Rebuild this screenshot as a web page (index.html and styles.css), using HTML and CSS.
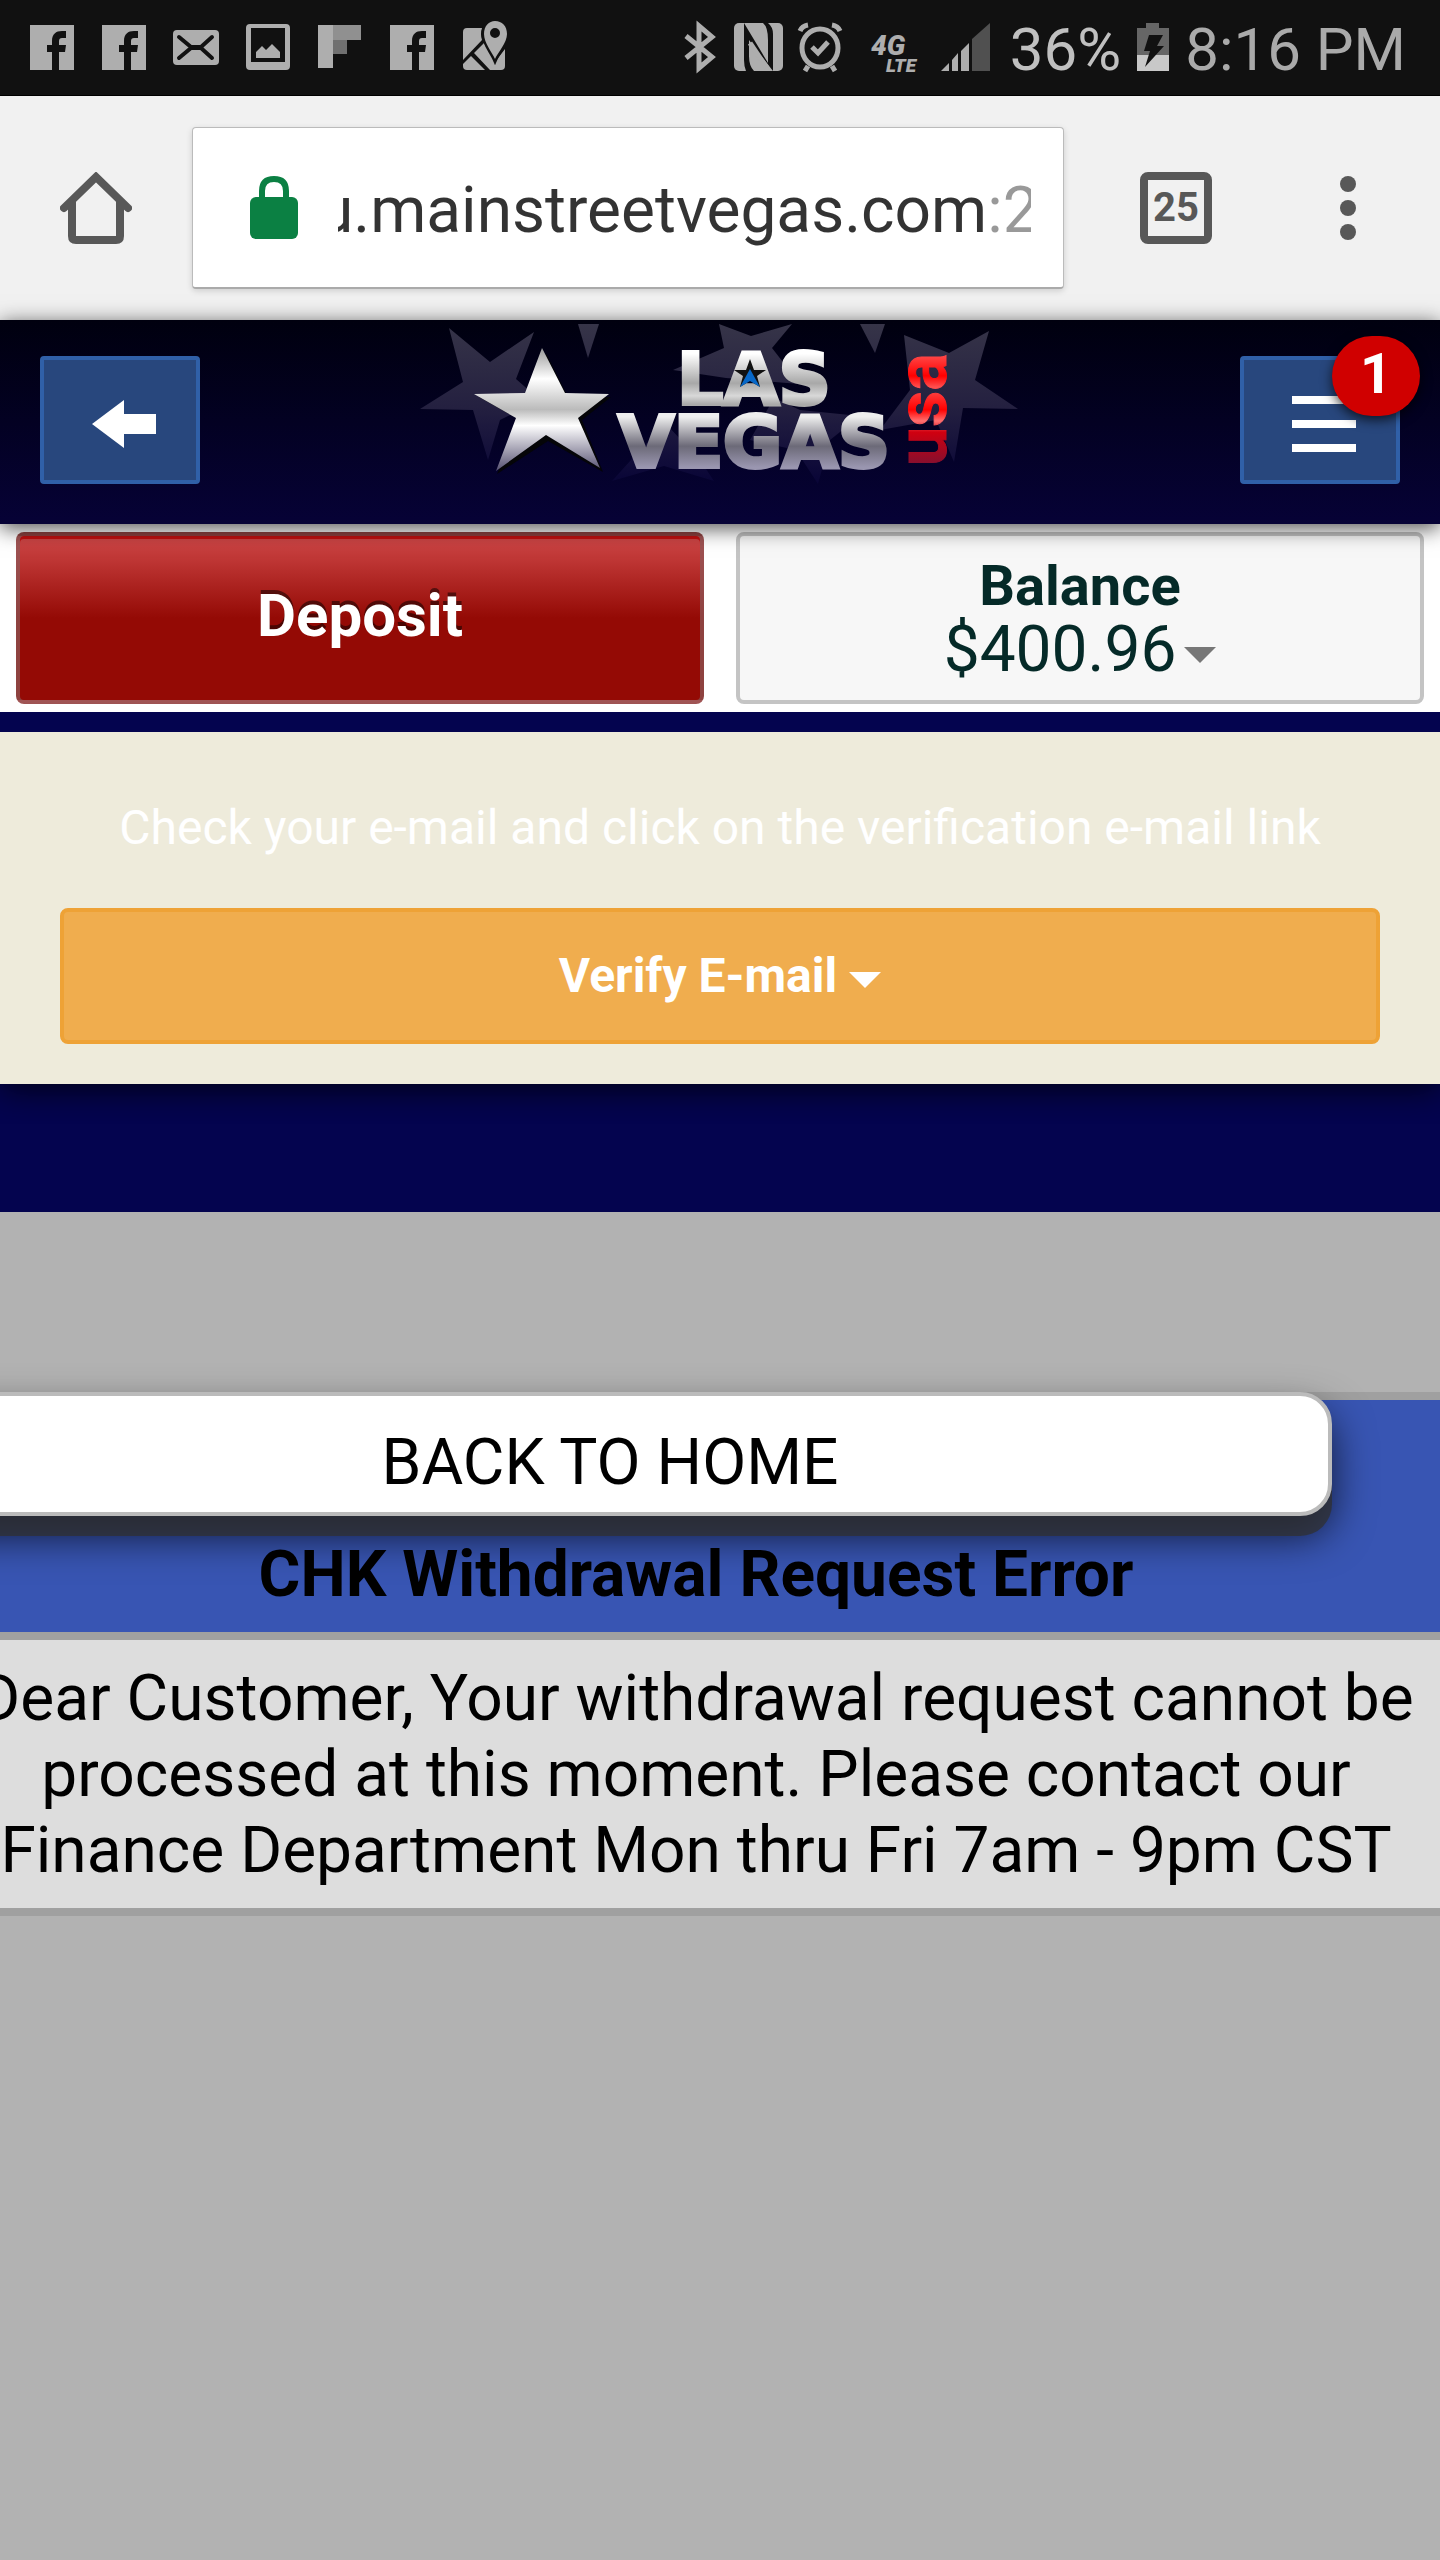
FILE: index.html
```
<!DOCTYPE html>
<html lang="en">
   <head>
      <meta charset="utf-8">
      <meta name="viewport" content="width=device-width, initial-scale=1">
      <title>Las Vegas USA</title>
      <link rel="stylesheet" href="styles.css">
   </head>
   <body>

      <!--
      Phone status bar
      -->
      <div class="status">
         <svg class="notifications" width="480" height="52" viewBox="30 20 480 52">
            <defs>
               <g id="facebook">
                  <rect width="44" height="45" />
                  <path class="cut" d="M22,45 V27 H17 V20 H22 V16 C22,9 26,6 32,6 H36 V13 H32 C30,13 29,14 29,16 V20 H36 L35,27 H29 V45 Z" />
               </g>
            </defs>
            <use href="#facebook" x="30" y="25" />
            <use href="#facebook" x="102" y="25" />
            <rect x="173" y="30" width="46" height="35" rx="4" />
            <path class="cut-line" d="M179,37 L191,47 H201 L212,37 M179,58 L191,48 H201 L212,58" />
            <path fill-rule="evenodd" d="M250,24 H286 Q290,24 290,28 V66 Q290,70 286,70 H250 Q246,70 246,66 V28 Q246,24 250,24 Z M251,28 V62 H285 V28 Z" />
            <path d="M256,58 V52 L262,46 L266,50 L272,44 L280,52 V58 Z" />
            <rect x="318" y="25" width="15" height="43" />
            <rect x="333" y="25" width="28" height="15" fill="#909090" />
            <rect x="333" y="40" width="14" height="14" fill="#707070" />
            <use href="#facebook" x="390" y="25" />
            <path d="M467,28 H482 Q480,34 482,40 L463,60 V32 Q463,28 467,28 Z" />
            <path d="M463,64 L471,56 L485,70 H467 Q463,70 463,66 Z" />
            <path d="M474,53 L484,43 L495,62 L505,49 V66 Q505,70 501,70 H490 Z" />
            <path class="pin" fill-rule="evenodd" d="M495,21 C502,21 507,26 507,34 C507,43 498,52 495,59 C492,52 484,43 484,34 C484,26 489,21 495,21 Z M495,28 A5,5 0 1 0 495,38 A5,5 0 1 0 495,28 Z" />
         </svg>
         <div class="system">
            <svg width="310" height="60" viewBox="684 20 310 60">
               <path class="thin" d="M686,36 L712,57 L699,68 V26 L712,37 L686,58" />
               <rect x="734" y="23" width="49" height="48" rx="5" />
               <path class="cut" d="M744,23 L768,63 V40 Q768,27 763,23 H768 Q773,27 773,34 V71 L749,40 V56 Q749,66 754,71 H746 Q744,66 744,60 Z" />
               <path class="thin" d="M750,43 L767,68" />
               <ellipse class="thin" cx="820" cy="48" rx="18" ry="19" />
               <path class="thin" d="M812,47 L818,53 L828,42 M800,31 Q802,26 808,25 M832,25 Q838,26 840,31 M808,66 L805,71 M832,66 L835,71" />
               <text class="network" x="871" y="55">4G</text>
               <text class="lte" x="886" y="72">LTE</text>
               <path d="M941,71 L949,63 V71 Z M952,60 L958,53 V71 H952 Z M961,51 L969,43 V71 H961 Z" />
               <path fill="#505050" d="M972,39 L990,23 V71 H972 Z" />
            </svg>
            <span class="percent">36%</span>
            <svg width="32" height="48" viewBox="0 0 32 48">
               <path fill="#666" d="M9,0 H22 V5 H32 V33 H0 V5 H9 Z" />
               <rect y="32" width="32" height="16" fill="#c8c8c8" />
               <path class="cut" d="M12,12 H26 L20,23 H27 L8,44 L13,28 H7 Z" />
            </svg>
            <span>8:16 PM</span>
         </div>
      </div>

      <!--
      Browser toolbar
      -->
      <div class="toolbar">
         <button class="tool" type="button" aria-label="Home">
            <svg width="72" height="72" viewBox="0 0 72 72">
               <path d="M4,36 L36,5 L68,36 M12,30 V64 Q12,68 16,68 H56 Q60,68 60,64 V30" />
            </svg>
         </button>
         <div class="address">
            <svg width="48" height="64" viewBox="0 0 48 64">
               <rect y="21" width="48" height="42" rx="6" fill="#0b8043" />
               <path d="M12,24 V15 Q12,3 24,3 Q36,3 36,15 V24" fill="none" stroke="#0b8043" stroke-width="6" />
            </svg>
            <div class="url-window">
               <input class="url" type="text" aria-label="Address" value="u.mainstreetvegas.com:2">
            </div>
         </div>
         <button class="tabs" type="button" aria-label="Tabs">25</button>
         <button class="more" type="button" aria-label="More">
            <svg width="16" height="64" viewBox="0 0 16 64">
               <circle cx="8" cy="8" r="8" />
               <circle cx="8" cy="32" r="8" />
               <circle cx="8" cy="56" r="8" />
            </svg>
         </button>
      </div>

      <!--
      Site header
      -->
      <header class="header">
         <button class="nav" type="button" aria-label="Back">
            <svg width="64" height="48" viewBox="0 0 64 48">
               <path d="M0,24 L32,0 V14 H64 V34 H32 V48 Z" />
            </svg>
         </button>
         <svg class="logo" width="600" height="180" viewBox="420 324 600 180">
            <defs>
               <linearGradient id="metal" x1="0" y1="0" x2="0" y2="1">
                  <stop offset="0.2" stop-color="#fff" />
                  <stop offset="0.55" stop-color="#a8a8a8" />
                  <stop offset="0.7" stop-color="#d8d8d8" />
                  <stop offset="0.8" stop-color="#aaa" />
               </linearGradient>
               <linearGradient id="steel" x1="0" y1="0" x2="0" y2="1">
                  <stop offset="0.2" stop-color="#eee" />
                  <stop offset="0.55" stop-color="#6c6a78" />
                  <stop offset="0.8" stop-color="#9a96b0" />
               </linearGradient>
               <linearGradient id="silver" x1="0" y1="0" x2="0" y2="1">
                  <stop offset="0" stop-color="#999" />
                  <stop offset="0.25" stop-color="#fff" />
                  <stop offset="0.5" stop-color="#bbb" />
                  <stop offset="0.63" stop-color="#fff" />
                  <stop offset="1" stop-color="#555070" />
               </linearGradient>
               <linearGradient id="red" x1="0" y1="0" x2="1" y2="0">
                  <stop offset="0" stop-color="#801030" />
                  <stop offset="0.3" stop-color="#d00010" />
                  <stop offset="0.4" stop-color="#ff7070" />
                  <stop offset="0.5" stop-color="#f00" />
                  <stop offset="0.7" stop-color="#ff5050" />
                  <stop offset="0.8" stop-color="#f00" />
                  <stop offset="1" stop-color="#ff5050" />
               </linearGradient>
               <linearGradient id="fade" gradientUnits="userSpaceOnUse" x1="0" y1="324" x2="0" y2="490">
                  <stop offset="0" stop-color="#363448" />
                  <stop offset="0.5" stop-color="#242040" />
                  <stop offset="1" stop-color="#060236" />
               </linearGradient>
            </defs>
            <g fill="url(#fade)">
               <path d="M449,328 L490,362 L534,332 L516,379 L540,400 L500,420 L488,460 L473,410 L420,409 L463,382 Z" />
               <path d="M578,324 H599 L588,358 Z" />
               <path d="M719,324 L724,348 L673,370 L726,378 L800,384 L772,348 L792,324 L751,336 Z" />
               <path d="M860,324 H885 L875,353 Z" />
               <path d="M989,331 L975,380 L1018,409 L963,408 L954,462 L936,420 L880,430 L910,390 L904,335 L949,353 Z" />
               <path d="M774,398 L800,410 L860,416 L830,440 L818,484 L796,450 L750,440 Z" />
               <path d="M666,424 L700,460 L714,481 L664,466 L612,481 L640,450 Z" />
            </g>
            <path class="shadow" d="M546,353 L568,397 L611,397 L582,420 L603,472 L548,441 L497,474 L520,420 L479,397 L530,397 Z" />
            <path fill="url(#silver)" d="M542,348 L565,393 L609,394 L578,418 L600,468 L546,435 L496,471 L516,418 L474,394 L525,393 Z" />
            <text class="las" x="754" y="404" text-anchor="middle">LAS</text>
            <path fill="#111" d="M750,359 L754,370 H766 L757,376 L760,387 L750,381 L740,387 L743,376 L734,370 H746 Z" />
            <path fill="#0868c8" d="M750,369 L760,387 L750,381 L740,387 Z" />
            <text class="vegas" x="754" y="467" text-anchor="middle">VEGAS</text>
            <text class="usa" x="0" y="0" transform="translate(946 466) rotate(-90)">usa</text>
         </svg>
         <button class="nav" type="button" aria-label="Menu">
            <svg width="64" height="56" viewBox="0 0 64 56">
               <path d="M0,0 H64 V8 H0 Z M0,24 H64 V32 H0 Z M0,48 H64 V56 H0 Z" />
            </svg>
            <span class="badge">1</span>
         </button>
      </header>

      <div class="account">
         <button class="deposit" type="button">Deposit</button>
         <button class="balance" type="button">
            <strong>Balance</strong>
            <span>$400.96<i class="caret"></i></span>
         </button>
      </div>

      <section class="verify">
         <p>Check your e-mail and click on the verification e-mail link</p>
         <button type="button">Verify E-mail<i class="caret"></i></button>
      </section>

      <!--
      Error message
      -->
      <main>
         <a class="back" href="#">BACK TO HOME</a>
         <table>
            <thead>
               <tr><th scope="col">CHK Withdrawal Request Error</th></tr>
            </thead>
            <tbody>
               <tr><td>Dear Customer, Your withdrawal request cannot be processed at this moment. Please contact our Finance Department Mon thru Fri 7am - 9pm CST</td></tr>
            </tbody>
         </table>
      </main>

   </body>
</html>
```
FILE: styles.css
```
* {
   box-sizing : border-box;
}

body {
   display : flex;
   flex-direction : column;
   min-height : 100vh;
   margin : 0px;
   background-color : #04044f;
   font-family : Roboto, Arial, sans-serif;
}

button, input {
   margin : 0px;
   padding : 0px;
   border : none;
   background : none;
   font-family : inherit;
}

svg {
   display : block;
   flex : none;
}

/* status bar */

.status {
   display : flex;
   justify-content : space-between;
   height : 96px;
   padding : 20px 34px 0px 30px;
   border-bottom : 1px solid #000;
   background-color : #111;
   color : #aaa;
   font-size : 60px;
   line-height : 60px;
}

.status svg {
   fill : #aeaeae;
}

.status .cut {
   fill : #111;
}

.status .cut-line {
   fill : none;
   stroke : #111;
   stroke-width : 4px;
   stroke-linecap : round;
}

.status .pin {
   stroke : #111;
   stroke-width : 5px;
   paint-order : stroke;
}

.status .thin {
   fill : none;
   stroke : #aeaeae;
   stroke-width : 5px;
}

.network, .lte {
   font-weight : 900;
   font-style : italic;
}

.network {
   font-size : 28px;
}

.lte {
   font-size : 19px;
}

.system {
   display : flex;
   gap : 16px;
}

.system svg + span + svg {
   margin-top : 3px;
}

.percent {
   color : #c0c0c0;
}

/* browser toolbar */

.toolbar {
   display : flex;
   align-items : center;
   height : 224px;
   padding : 0px 84px 0px 60px;
   background-color : #f1f1f1;
}

.tool path {
   fill : none;
   stroke : #585858;
   stroke-width : 8px;
   stroke-linecap : round;
}

.address {
   display : flex;
   flex : 1;
   align-items : center;
   gap : 40px;
   min-width : 0px;
   height : 162px;
   margin : 0px 76px 0px 60px;
   padding : 0px 32px 0px 57px;
   border : 1px solid #bbb;
   border-bottom : 2px solid #aaa;
   border-radius : 4px;
   background-color : #fff;
   box-shadow : 0px 2px 6px rgba(0, 0, 0, 0.15);
}

.url-window {
   flex : 1;
   min-width : 0px;
   padding-top : 6px;
   overflow : hidden;
}

.url {
   display : block;
   width : calc(100% + 20px);
   height : 80px;
   margin-left : -20px;
   background-image : linear-gradient(to left, #999 42px, #333 42px);
   -webkit-background-clip : text;
   background-clip : text;
   color : transparent;
   font-size : 64px;
}

.tabs {
   width : 72px;
   height : 72px;
   border : 8px solid #585858;
   border-radius : 8px;
   color : #585858;
   font-size : 40px;
   font-weight : bold;
   line-height : 56px;
}

.more {
   margin-left : 128px;
   fill : #585858;
}

/* site header */

.header {
   position : relative;
   z-index : 1;
   display : flex;
   justify-content : space-between;
   padding : 36px 40px 40px;
   background-image : linear-gradient(#00000f, #060236);
   box-shadow : 0px 4px 20px rgba(0, 0, 0, 0.7);
}

.nav {
   position : relative;
   display : flex;
   align-items : center;
   justify-content : center;
   width : 160px;
   height : 128px;
   padding : 8px 0px 0px 8px;
   border : 4px solid #3060a8;
   border-radius : 4px;
   background-color : #28477d;
   fill : #fff;
}

.badge {
   position : absolute;
   top : -24px;
   right : -24px;
   width : 88px;
   height : 80px;
   border-radius : 40px;
   background-color : #d00000;
   box-shadow : 0px 4px 12px rgba(0, 0, 0, 0.7);
   color : #fff;
   font-size : 56px;
   font-weight : bold;
   line-height : 76px;
}

.logo {
   margin : -32px 0px -20px;
}

.logo text {
   font-family : "DejaVu Sans", sans-serif;
   font-weight : bold;
}

.logo .shadow {
   fill : #050508;
}

.logo .las {
   fill : url(#metal);
   stroke : url(#metal);
   stroke-width : 4px;
   font-size : 72px;
}

.logo .vegas {
   fill : url(#steel);
   stroke : url(#steel);
   stroke-width : 4px;
   font-size : 72px;
}

.logo .usa {
   fill : url(#red);
   stroke : url(#red);
   stroke-width : 1px;
   font-family : Roboto, sans-serif;
   font-size : 70px;
}

/* deposit and balance */

.account {
   display : grid;
   grid-template-columns : 1fr 1fr;
   gap : 32px;
   padding : 8px 16px;
   background-color : #fff;
}

.account button {
   height : 172px;
   border-radius : 8px;
}

.deposit {
   padding-bottom : 6px;
   border : 4px solid rgba(140, 90, 90, 0.7);
   background-image : linear-gradient(#d04848, #940a05 50%);
   box-shadow : inset 0px 3px 0px #c41010;
   color : #fff;
   font-size : 60px;
   font-weight : bold;
   text-shadow : 0px -4px 0px rgba(0, 0, 0, 0.5);
}

.balance {
   border : 4px solid #c4c4c4;
   background-color : #f7f7f7;
   color : #052a28;
   font-size : 64px;
   line-height : 64px;
}

.balance strong, .balance span {
   display : block;
}

.balance strong {
   font-size : 56px;
}

.caret {
   display : inline-block;
   margin-left : 8px;
   border : 16px solid transparent;
   border-top-color : #777;
   border-bottom : none;
   vertical-align : 8px;
}

/* e-mail verification */

.verify {
   margin-top : 20px;
   padding : 60px 60px 40px;
   background-color : #eeebdb;
   box-shadow : 0px 4px 32px rgba(0, 0, 0, 0.8);
   clip-path : inset(0px 0px -40px 0px);
   color : #fff;
   font-size : 48px;
}

.verify p {
   margin : 0px 0px 44px;
   line-height : 72px;
   text-align : center;
}

.verify button {
   width : 100%;
   height : 136px;
   padding-bottom : 2px;
   border : 4px solid #eea236;
   border-radius : 8px;
   background-color : #f0ad4e;
   color : #fff;
   font-size : 48px;
   font-weight : bold;
}

.verify .caret {
   margin-left : 12px;
   border-top-color : #fff;
   vertical-align : 4px;
}

/* error message */

main {
   position : relative;
   flex : 1;
   overflow : hidden;
   margin-top : 128px;
   padding-top : 180px;
   background-color : #b2b2b2;
   font-size : 64px;
   line-height : 76px;
}

table {
   width : calc(100% + 48px);
   margin-left : -48px;
   border-spacing : 0px;
   text-align : center;
}

th {
   padding : 137px 20px 19px;
   border-top : 8px solid #a0a0a0;
   border-bottom : 8px solid #a0a0a0;
   background-color : #3855b3;
}

td {
   padding : 21px 20px 19px;
   border-bottom : 8px solid #a0a0a0;
   background-color : #ddd;
}

.back {
   position : absolute;
   top : 180px;
   right : 108px;
   left : -112px;
   height : 124px;
   padding : 22px 0px;
   border : 4px solid #bbb;
   border-radius : 32px;
   background-color : #fff;
   box-shadow : 0px 20px 0px rgba(48, 48, 48, 0.75), 0px 20px 40px rgba(0, 0, 0, 0.7);
   color : #000;
   line-height : 90px;
   text-align : center;
   text-decoration : none;
}
```
